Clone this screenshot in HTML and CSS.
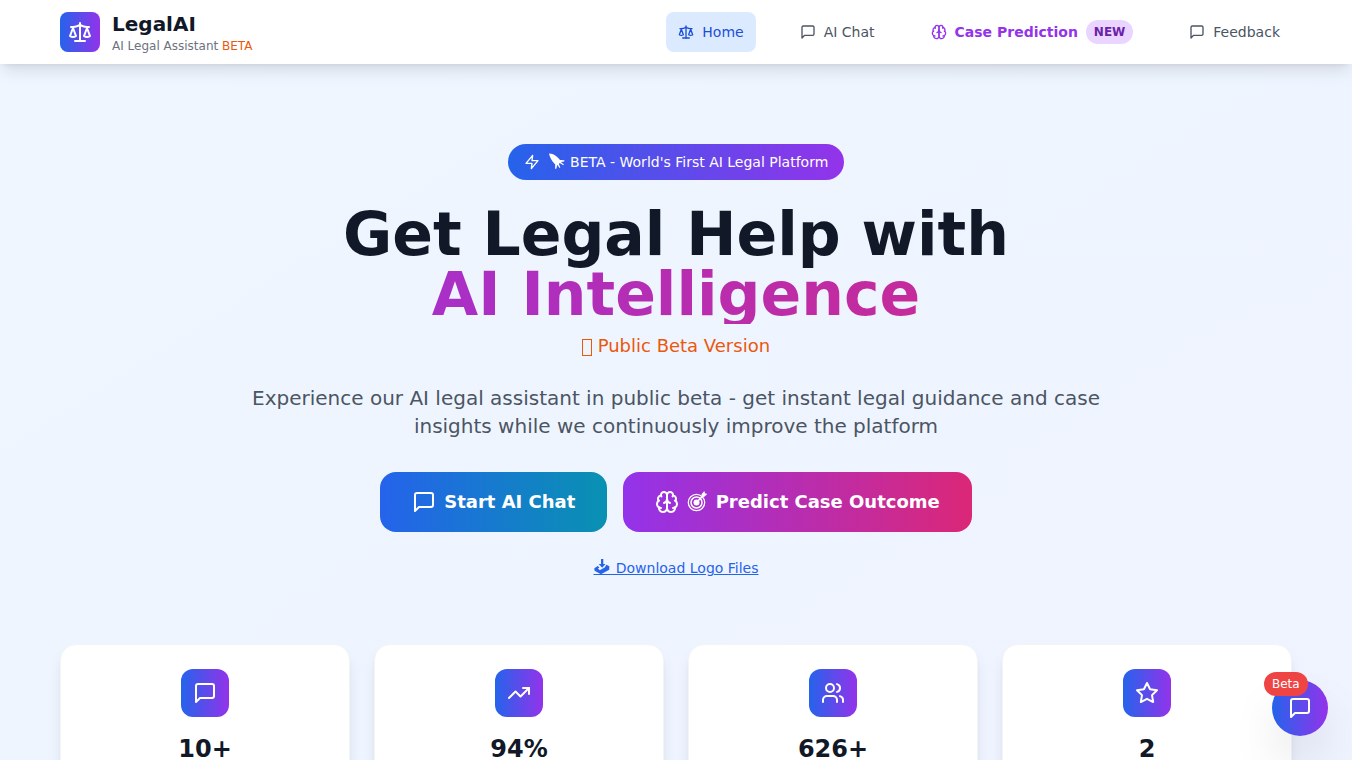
FILE: index.html
```html
<!DOCTYPE html>
<html lang="en">
<head>
<meta charset="utf-8">
<meta name="viewport" content="width=device-width, initial-scale=1">
<title>LegalAI</title>
<link rel="stylesheet" href="styles.css">
</head>
<body>
<svg class="sprite" aria-hidden="true">
  <symbol id="scale" viewBox="0 0 24 24"><path d="m16 16 3-8 3 8c-.87.65-1.92 1-3 1s-2.13-.35-3-1Z"/><path d="m2 16 3-8 3 8c-.87.65-1.92 1-3 1s-2.13-.35-3-1Z"/><path d="M7 21h10"/><path d="M12 3v18"/><path d="M3 7h2c2 0 5-1 7-2 2 1 5 2 7 2h2"/></symbol>
  <symbol id="message" viewBox="0 0 24 24"><path d="M21 15a2 2 0 0 1-2 2H7l-4 4V5a2 2 0 0 1 2-2h14a2 2 0 0 1 2 2z"/></symbol>
  <symbol id="brain" viewBox="0 0 24 24"><path d="M12 5a3 3 0 1 0-5.997.125 4 4 0 0 0-2.526 5.77 4 4 0 0 0 .556 6.588A4 4 0 1 0 12 18Z"/><path d="M12 5a3 3 0 1 1 5.997.125 4 4 0 0 1 2.526 5.77 4 4 0 0 1-.556 6.588A4 4 0 1 1 12 18Z"/><path d="M15 13a4.500 4.500 0 0 1-3-4 4.500 4.500 0 0 1-3 4"/><path d="M17.599 6.500a3 3 0 0 0 .399-1.375"/><path d="M6.003 5.125A3 3 0 0 0 6.401 6.500"/><path d="M3.477 10.896a4 4 0 0 1 .585-.396"/><path d="M19.938 10.500a4 4 0 0 1 .585.396"/><path d="M6 18a4 4 0 0 1-1.967-.516"/><path d="M19.967 17.484A4 4 0 0 1 18 18"/></symbol>
  <symbol id="zap" viewBox="0 0 24 24"><path d="M13 2 3 14h9l-1 8 10-12h-9l1-8z"/></symbol>
  <symbol id="trend" viewBox="0 0 24 24"><path d="m22 7-8.500 8.500-5-5L2 17"/><path d="M16 7h6v6"/></symbol>
  <symbol id="users" viewBox="0 0 24 24"><path d="M16 21v-2a4 4 0 0 0-4-4H6a4 4 0 0 0-4 4v2"/><circle cx="9" cy="7" r="4"/><path d="M22 21v-2a4 4 0 0 0-3-3.870"/><path d="M16 3.130a4 4 0 0 1 0 7.750"/></symbol>
  <symbol id="star" viewBox="0 0 24 24"><path d="M12 2l3.090 6.260L22 9.270l-5 4.870 1.180 6.880L12 17.770l-6.180 3.250L7 14.140 2 9.270l6.910-1.010z"/></symbol>
  <symbol id="rocket" viewBox="0 0 18 18"><path fill="currentColor" d="M1 1.500C4 1.500 7.500 3 10 5.700L12 8l4.500.2-.4 1.300-3.200.6 3 2.500-.6.700-3.600-2.200-.8.800 1.400 3.600-.8.600-2.200-3.400-.9 3.900-1.300.4L7.200 12.600 4.600 9.500C2.800 7 1.500 4.300 1 1.500z"/></symbol>
  <symbol id="target" viewBox="0 0 22 22"><g fill="none" stroke="currentColor"><circle cx="9.500" cy="12.500" r="8.200" stroke-width="1.300"/><circle cx="9.500" cy="12.500" r="5.500" stroke-width="1.500"/><path stroke-width="1.600" d="M10 12 17 4.500"/></g><circle cx="9.500" cy="12.500" r="3" fill="currentColor"/><path fill="currentColor" d="M14.500 4.200 17.300 1l.7 2.200 2.300.7-3.300 3-2.200-.3z"/></symbol>
  <symbol id="inbox" viewBox="0 0 18 18"><path fill="currentColor" fill-rule="evenodd" d="M8 1h2.300v5h2.200L9.200 9.800 5.700 6H8z M1.300 10.200 4.800 8l1.600 1.600-1.500 1 1.900 1.700 4.900-2.900 1.700-2.600 3 1.500-.2 3.500L8 16.200l-6.400-3.400z"/></symbol>
</svg>

<header class="header">
  <div class="container header-row">
    <a class="brand" href="#home">
      <span class="brand-mark"><svg class="icon icon-lg"><use href="#scale"/></svg></span>
      <span class="brand-text">
        <span class="brand-name">LegalAI</span>
        <span class="brand-tag">AI Legal Assistant <span class="beta">BETA</span></span>
      </span>
    </a>
    <nav class="nav" aria-label="Main">
      <a class="nav-link active" href="#home"><svg class="icon icon-sm"><use href="#scale"/></svg>Home</a>
      <a class="nav-link" href="#chat"><svg class="icon icon-sm"><use href="#message"/></svg>AI Chat</a>
      <a class="nav-link featured" href="#prediction"><svg class="icon icon-sm"><use href="#brain"/></svg>Case Prediction<span class="pill-new">NEW</span></a>
      <a class="nav-link" href="#feedback"><svg class="icon icon-sm"><use href="#message"/></svg>Feedback</a>
    </nav>
  </div>
</header>

<main class="container">
  <section class="hero">
    <div class="badge"><svg class="icon icon-sm"><use href="#zap"/></svg><span><svg class="glyph glyph-sm"><use href="#rocket"/></svg> BETA - World's First AI Legal Platform</span></div>
    <h1 class="title">Get Legal Help with <span class="title-accent">AI Intelligence</span></h1>
    <p class="version"><span class="glyph-box" aria-hidden="true"></span> Public Beta Version</p>
    <p class="lead">Experience our AI legal assistant in public beta - get instant legal guidance and case insights while we continuously improve the platform</p>
    <div class="actions">
      <button class="btn btn-chat" type="button"><svg class="icon icon-lg"><use href="#message"/></svg>Start AI Chat</button>
      <button class="btn btn-predict" type="button"><svg class="icon icon-lg"><use href="#brain"/></svg><span><svg class="glyph glyph-lg"><use href="#target"/></svg> Predict Case Outcome</span></button>
    </div>
    <a class="download" href="#logos"><svg class="glyph glyph-sm glyph-underlined"><use href="#inbox"/></svg>&nbsp;&nbsp;&nbsp;&nbsp; Download Logo Files</a>
  </section>

  <section class="stats" aria-label="Statistics">
    <div class="card"><span class="card-icon"><svg class="icon icon-lg"><use href="#message"/></svg></span><strong class="card-value">10+</strong></div>
    <div class="card"><span class="card-icon"><svg class="icon icon-lg"><use href="#trend"/></svg></span><strong class="card-value">94%</strong></div>
    <div class="card"><span class="card-icon"><svg class="icon icon-lg"><use href="#users"/></svg></span><strong class="card-value">626+</strong></div>
    <div class="card"><span class="card-icon"><svg class="icon icon-lg"><use href="#star"/></svg></span><strong class="card-value">2</strong></div>
  </section>
</main>

<button class="fab" type="button" aria-label="Open chat"><svg class="icon icon-lg"><use href="#message"/></svg><span class="fab-badge">Beta</span></button>
</body>
</html>
```
FILE: styles.css
```css
* {
  box-sizing: border-box;
  margin: 0;
}

body {
  min-height: 100vh;
  font-family: "DejaVu Sans", sans-serif;
  font-size: 16px;
  line-height: 24px;
  color: #111827;
  background: linear-gradient(to bottom right, #eff6ff, #eef2ff 140%);
}

a {
  color: inherit;
  text-decoration: none;
}

button {
  border: 0;
  font: inherit;
  color: inherit;
  cursor: pointer;
}

.sprite {
  position: absolute;
  width: 0;
  height: 0;
}

.icon {
  flex: none;
  fill: none;
  stroke: currentColor;
  stroke-width: 2;
  stroke-linecap: round;
  stroke-linejoin: round;
}

.icon-sm {
  width: 16px;
  height: 16px;
}

.icon-lg {
  width: 24px;
  height: 24px;
}

/* Pictographs that sit inside a line of text */
.glyph {
  vertical-align: text-bottom;
}

.glyph-sm {
  width: 18px;
  height: 18px;
}

.glyph-lg {
  width: 22px;
  height: 22px;
}

/* Lets the link's underline run below the pictograph */
.glyph-underlined {
  margin-right: -18px;
}

.glyph-box {
  display: inline-block;
  width: 10px;
  height: 17px;
  border: 1px solid currentColor;
  vertical-align: text-bottom;
}

.container {
  max-width: 1280px;
  margin: 0 auto;
  padding: 0 24px;
}

.header {
  position: sticky;
  top: 0;
  z-index: 10;
  background: #fff;
  box-shadow: 0 10px 15px -3px rgba(0, 0, 0, 0.1), 0 4px 6px -4px rgba(0, 0, 0, 0.1);
}

.header-row {
  display: flex;
  align-items: center;
  justify-content: space-between;
  min-height: 64px;
}

.brand {
  display: flex;
  align-items: center;
  gap: 12px;
}

.brand-mark {
  display: grid;
  place-items: center;
  width: 40px;
  height: 40px;
  border-radius: 8px;
  color: #fff;
  background: linear-gradient(to right, #2563eb, #9333ea);
}

.brand-text {
  display: flex;
  flex-direction: column;
}

.brand-name {
  font-size: 20px;
  line-height: 28px;
  font-weight: 700;
}

.brand-tag {
  font-size: 12px;
  line-height: 16px;
  color: #6b7280;
}

.beta {
  color: #ea580c;
}

.nav {
  display: flex;
  gap: 32px;
}

.nav-link {
  display: flex;
  align-items: center;
  gap: 8px;
  padding: 8px 12px;
  border-radius: 8px;
  font-size: 14px;
  color: #4b5563;
}

.nav-link.active {
  color: #1d4ed8;
  background: #dbeafe;
}

.nav-link.featured {
  font-weight: 700;
  color: #9333ea;
}

.pill-new {
  padding: 4px 8px;
  border-radius: 12px;
  font-size: 12px;
  line-height: 16px;
  color: #6b21a8;
  background: #e9d5ff;
}

.hero {
  display: flex;
  flex-direction: column;
  align-items: center;
  padding: 80px 0 64px;
  text-align: center;
}

.badge {
  display: flex;
  align-items: center;
  gap: 8px;
  margin-bottom: 24px;
  padding: 8px 16px;
  border-radius: 18px;
  font-size: 14px;
  line-height: 20px;
  color: #fff;
  background: linear-gradient(to right, #2563eb, #9333ea);
}

.title {
  width: 100%;
  margin-bottom: 8px;
  font-size: 60px;
  line-height: 60px;
  font-weight: 700;
}

.title-accent {
  display: block;
  color: transparent;
  background: linear-gradient(to right, #9333ea, #db2777);
  background-clip: text;
  -webkit-background-clip: text;
}

.version {
  margin-bottom: 24px;
  font-size: 18px;
  line-height: 28px;
  color: #ea580c;
}

.lead {
  max-width: 896px;
  margin-bottom: 32px;
  font-size: 20px;
  line-height: 28px;
  color: #4b5563;
}

.actions {
  display: flex;
  flex-wrap: wrap;
  justify-content: center;
  gap: 16px;
  margin-bottom: 24px;
}

.btn {
  display: flex;
  align-items: center;
  gap: 8px;
  padding: 16px 32px;
  border-radius: 16px;
  font-size: 18px;
  line-height: 28px;
  font-weight: 700;
  color: #fff;
}

.btn-chat {
  background: linear-gradient(to right, #2563eb, #0891b2);
}

.btn-predict {
  background: linear-gradient(to right, #9333ea, #db2777);
}

.download {
  font-size: 14px;
  color: #2563eb;
  text-decoration: underline;
}

.stats {
  display: grid;
  grid-template-columns: repeat(4, 1fr);
  gap: 24px;
  padding-bottom: 64px;
}

.card {
  display: flex;
  flex-direction: column;
  align-items: center;
  gap: 16px;
  padding: 24px;
  border: 1px solid #f3f4f6;
  border-radius: 16px;
  background: #fff;
  box-shadow: 0 10px 15px -3px rgba(0, 0, 0, 0.1), 0 4px 6px -4px rgba(0, 0, 0, 0.1);
}

.card-icon {
  display: grid;
  place-items: center;
  width: 48px;
  height: 48px;
  border-radius: 12px;
  color: #fff;
  background: linear-gradient(to right, #2563eb, #9333ea);
}

.card-value {
  font-size: 24px;
  line-height: 32px;
}

.fab {
  position: fixed;
  right: 24px;
  bottom: 24px;
  z-index: 20;
  display: grid;
  place-items: center;
  width: 56px;
  height: 56px;
  padding: 0;
  border-radius: 50%;
  color: #fff;
  background: linear-gradient(to right, #2563eb, #9333ea);
  box-shadow: 0 25px 50px -12px rgba(0, 0, 0, 0.25);
}

.fab-badge {
  position: absolute;
  top: -8px;
  left: -8px;
  padding: 4px 8px;
  border-radius: 12px;
  font-size: 12px;
  line-height: 16px;
  background: #ef4444;
}
```
